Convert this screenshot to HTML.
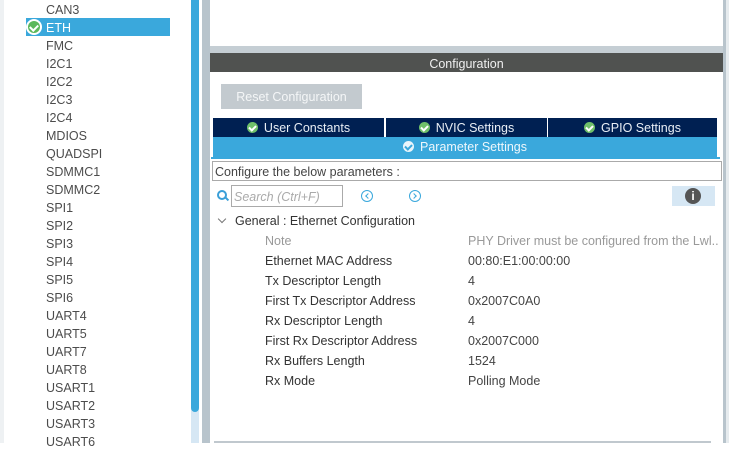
<!DOCTYPE html><html><head><style>
body{margin:0;width:729px;height:443px;overflow:hidden;background:#fff;font-family:"Liberation Sans",sans-serif;font-size:12.5px;color:#4a4a4a;position:relative}
.a{position:absolute}
.li{position:absolute;left:46px;color:#4c4c4c}
.ck{display:inline-block;width:11px;height:11px;border-radius:50%;background:#6fc06a;position:relative;vertical-align:-1px;margin-right:6px}
.ck:after{content:"";position:absolute;left:3px;top:2px;width:3px;height:5px;border:solid #fff;border-width:0 2px 2px 0;transform:rotate(45deg)}
.ck.w{background:#e9f5fb}.ck.w:after{border-color:#3aa8dc}
.tab{position:absolute;top:118px;height:19px;background:#002052;color:#e8eef5;text-align:center;line-height:20px;font-size:12.5px}
.r{position:absolute;left:265px;color:#333}
.v{position:absolute;left:468px;color:#444}
.cir{position:absolute;top:190px;width:10px;height:10px;border:1.5px solid #3aa8dc;border-radius:50%}
</style></head><body>
<div class="a" style="left:0;top:0;width:4px;height:443px;background:#eef1f3"></div>
<div class="li" style="top:3px">CAN3</div>
<div class="a" style="left:26px;top:18px;width:144px;height:18px;background:#3aa8dc"></div>
<div class="a" style="left:26px;top:19px;width:16px;height:16px;border-radius:50%;background:#fff"></div>
<div class="a" style="left:28px;top:21px;width:12px;height:12px;border-radius:50%;background:#5cb85c"></div>
<div class="a" style="left:31px;top:23px;width:4px;height:6px;border:solid #fff;border-width:0 2px 2px 0;transform:rotate(45deg)"></div>
<div class="li" style="top:21px;color:#fff">ETH</div>
<div class="li" style="top:39px">FMC</div>
<div class="li" style="top:57px">I2C1</div>
<div class="li" style="top:75px">I2C2</div>
<div class="li" style="top:93px">I2C3</div>
<div class="li" style="top:111px">I2C4</div>
<div class="li" style="top:129px">MDIOS</div>
<div class="li" style="top:147px">QUADSPI</div>
<div class="li" style="top:165px">SDMMC1</div>
<div class="li" style="top:183px">SDMMC2</div>
<div class="li" style="top:201px">SPI1</div>
<div class="li" style="top:219px">SPI2</div>
<div class="li" style="top:237px">SPI3</div>
<div class="li" style="top:255px">SPI4</div>
<div class="li" style="top:273px">SPI5</div>
<div class="li" style="top:291px">SPI6</div>
<div class="li" style="top:309px">UART4</div>
<div class="li" style="top:327px">UART5</div>
<div class="li" style="top:345px">UART7</div>
<div class="li" style="top:363px">UART8</div>
<div class="li" style="top:381px">USART1</div>
<div class="li" style="top:399px">USART2</div>
<div class="li" style="top:417px">USART3</div>
<div class="li" style="top:435px">USART6</div>
<div class="a" style="left:191px;top:0;width:8px;height:443px;background:#d6e7f4"></div>
<div class="a" style="left:191px;top:0;width:8px;height:412px;background:#3aa8dc;border-radius:0 0 4px 4px"></div>
<div class="a" style="left:202px;top:0;width:8px;height:443px;background:#b8c4cc"></div>
<div class="a" style="left:210px;top:46px;width:515px;height:7px;background:#c5ced4"></div>
<div class="a" style="left:723px;top:0;width:3px;height:443px;background:#b8c4cc"></div>
<div class="a" style="left:726px;top:0;width:3px;height:443px;background:#e6ebee"></div>
<div class="a" style="left:210px;top:53px;width:513px;height:19px;background:#505250;color:#f0f0f0;text-align:center;line-height:22px">Configuration</div>
<div class="a" style="left:221px;top:84px;width:141px;height:25px;background:#c3cacf;color:#f4f6f7;text-align:center;line-height:26px">Reset Configuration</div>
<div class="tab" style="left:213px;width:171px"><span class="ck"></span>User Constants</div>
<div class="tab" style="left:386px;width:161px"><span class="ck"></span>NVIC Settings</div>
<div class="tab" style="left:548px;width:169px"><span class="ck"></span>GPIO Settings</div>
<div class="a" style="left:213px;top:137px;width:504px;height:20px;background:#3aa8dc;color:#eef7fc;text-align:center;line-height:21px"><span class="ck w"></span>Parameter Settings</div>
<div class="a" style="left:211px;top:157px;width:509px;height:2px;background:#3aa8dc"></div>
<div class="a" style="left:212px;top:161px;width:506px;height:18px;border:1px solid #aaa;line-height:20px;padding-left:2px;color:#444">Configure the below parameters :</div>
<div class="a" style="left:217px;top:190px;width:6px;height:6px;border:2px solid #3a9fd8;border-radius:50%"></div>
<div class="a" style="left:225px;top:198px;width:4px;height:2px;background:#3a9fd8;transform:rotate(45deg)"></div>
<div class="a" style="left:231px;top:185px;width:108px;height:20px;border:1px solid #aaa;color:#aaa;font-style:italic;line-height:22px;padding-left:2px">Search (Ctrl+F)</div>
<div class="cir" style="left:361px"></div><div class="a" style="left:366px;top:194px;width:3px;height:3px;border:solid #3aa8dc;border-width:0 0 1.5px 1.5px;transform:rotate(45deg)"></div>
<div class="cir" style="left:409px"></div><div class="a" style="left:412px;top:194px;width:3px;height:3px;border:solid #3aa8dc;border-width:1.5px 1.5px 0 0;transform:rotate(45deg)"></div>
<div class="a" style="left:672px;top:186px;width:43px;height:20px;background:#d6e7f4"></div>
<div class="a" style="left:685px;top:188px;width:16px;height:16px;border-radius:50%;background:#555;color:#fff;font-weight:bold;text-align:center;line-height:16px;font-size:12px">i</div>
<div class="a" style="left:219px;top:216px;width:5px;height:5px;border:solid #777;border-width:0 1px 1px 0;transform:rotate(45deg)"></div>
<div class="a" style="left:235px;top:214px;color:#333">General : Ethernet Configuration</div>
<div class="r" style="top:234px;color:#999">Note</div><div class="v" style="top:234px;color:#999;width:250px;overflow:hidden;white-space:nowrap">PHY Driver must be configured from the Lwl...</div>
<div class="r" style="top:254px">Ethernet MAC Address</div><div class="v" style="top:254px">00:80:E1:00:00:00</div>
<div class="r" style="top:274px">Tx Descriptor Length</div><div class="v" style="top:274px">4</div>
<div class="r" style="top:294px">First Tx Descriptor Address</div><div class="v" style="top:294px">0x2007C0A0</div>
<div class="r" style="top:314px">Rx Descriptor Length</div><div class="v" style="top:314px">4</div>
<div class="r" style="top:334px">First Rx Descriptor Address</div><div class="v" style="top:334px">0x2007C000</div>
<div class="r" style="top:354px">Rx Buffers Length</div><div class="v" style="top:354px">1524</div>
<div class="r" style="top:374px">Rx Mode</div><div class="v" style="top:374px">Polling Mode</div>
<div class="a" style="left:214px;top:441px;width:497px;height:2px;background:#c0c8ce"></div>
</body></html>
